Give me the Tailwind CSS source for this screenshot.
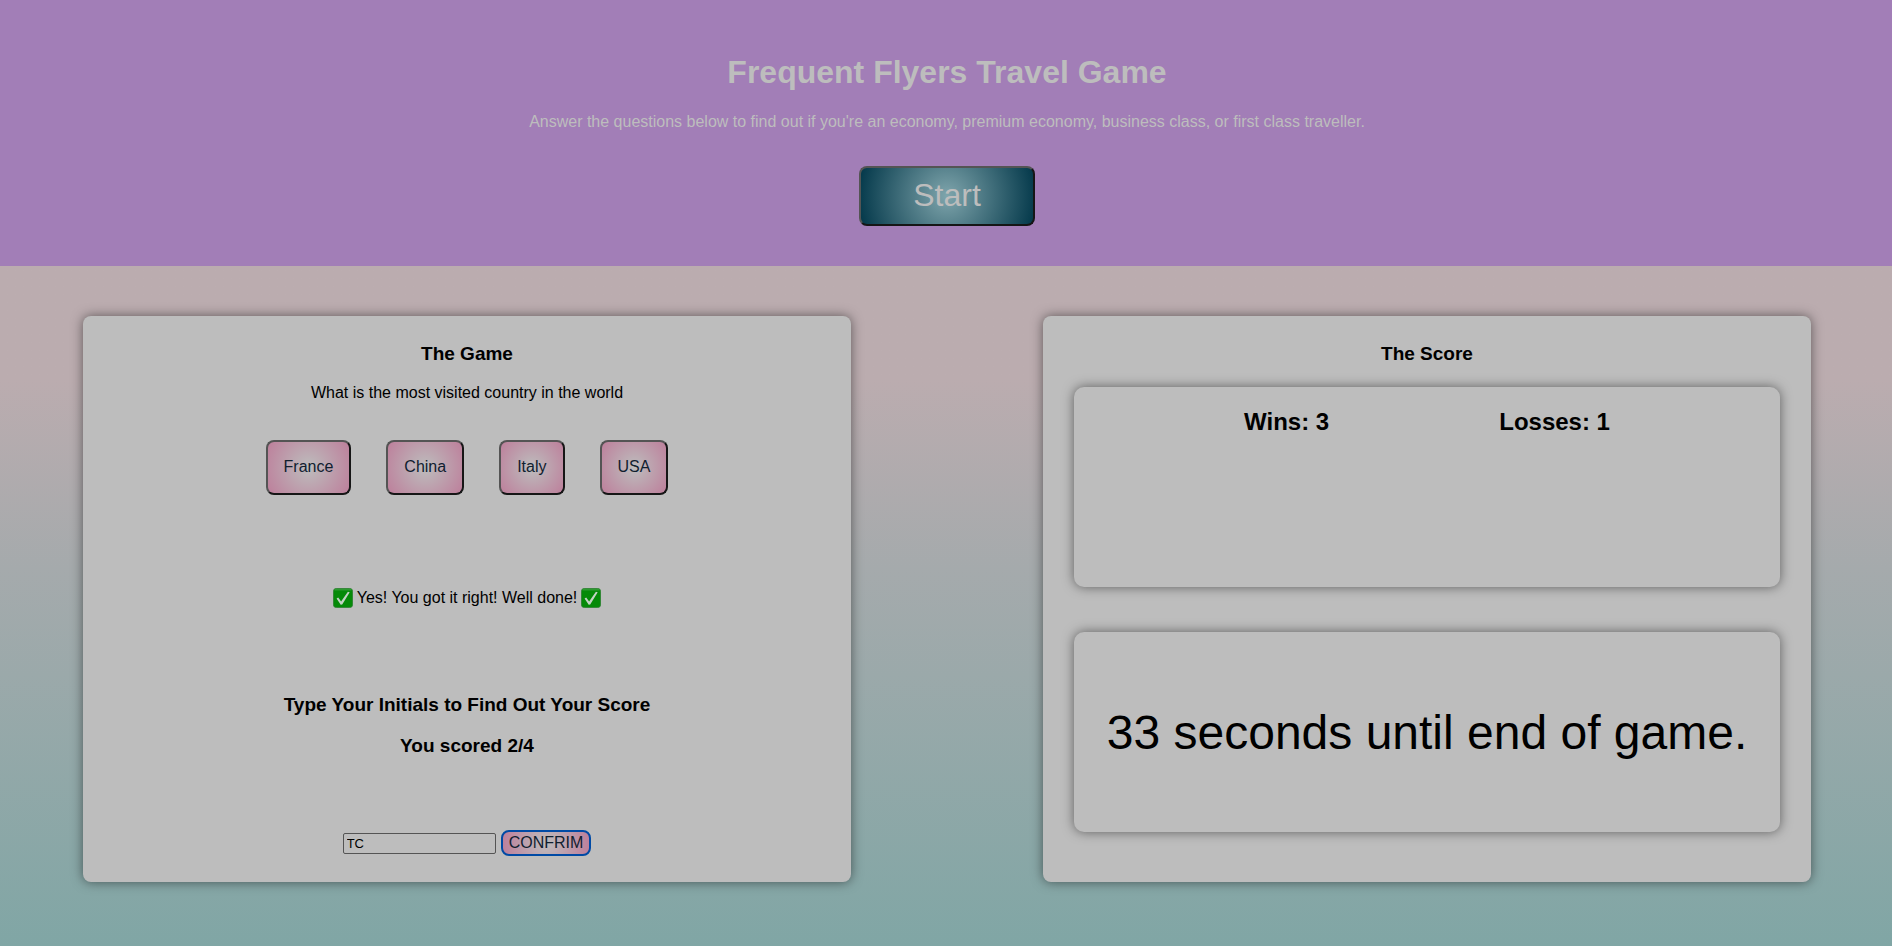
<!DOCTYPE html>
<html lang="en">
<head>
<meta charset="utf-8">
<meta name="viewport" content="width=device-width, initial-scale=1">
<title>Frequent Flyers Travel Game</title>
<script src="https://cdn.jsdelivr.net/npm/@tailwindcss/browser@4"></script>
</head>
<body class="flex min-h-screen flex-col bg-linear-to-b from-[#bbacaf] from-40% via-[#a5aaac] via-60% to-[#80a6a5] text-center font-['Liberation_Sans',Arial,sans-serif] text-base text-black">
<svg class="hidden" aria-hidden="true">
  <symbol id="tick" viewBox="0 0 20 20">
    <rect x=".4" y=".4" width="19.2" height="19.2" rx="3" fill="#058a08" stroke="#2a7d2e" stroke-width=".8"/>
    <rect x="1.2" y="1" width="17.6" height="1.6" rx=".8" fill="#2c9a2f"/>
    <path d="M3.6 10.6 5.2 9.5 8.1 13.6 14.9 3.8 16.7 4.3 9.2 16.6 7.7 16.7Z" fill="#c3d3c4"/>
  </symbol>
</svg>
<header class="flex flex-col items-center bg-[#a27eb7] pt-[54px] pb-10 pl-0.5 text-[#bdbdbd]">
  <h1 class="text-[32px] leading-[37px] font-bold">Frequent Flyers Travel Game</h1>
  <p class="mt-[22px] leading-[18px]">Answer the questions below to find out if you're an economy, premium economy, business class, or first class traveller.</p>
  <button type="button" class="mt-[35px] h-15 w-44 rounded-lg border-2 border-t-[#545454] border-r-[#161616] border-b-[#161616] border-l-[#545454] bg-[radial-gradient(circle,#7fa5ac,#03384a)] pb-0.5 text-[32px] leading-9">Start</button>
</header>
<main class="grid grid-cols-2 gap-48 pt-[50px] pr-[81px] pb-16 pl-[83px]">
  <section class="flex min-h-[566px] flex-col items-center rounded-lg bg-[#bdbdbd] pt-[27px] pb-[26px] shadow-[0_0_12px_rgba(0,0,0,0.5)]">
    <h2 class="text-[19px] leading-[22px] font-bold">The Game</h2>
    <p class="mt-[19px] leading-[18px]">What is the most visited country in the world</p>
    <div class="mt-[38px] flex gap-[35px] text-[#10202f]">
      <button type="button" class="h-[55px] rounded-lg border-2 border-t-[#545454] border-r-[#161616] border-b-[#161616] border-l-[#545454] bg-[radial-gradient(circle,#bdbdbd,#bd7f9b)] px-4 pb-0.5">France</button>
      <button type="button" class="h-[55px] rounded-lg border-2 border-t-[#545454] border-r-[#161616] border-b-[#161616] border-l-[#545454] bg-[radial-gradient(circle,#bdbdbd,#bd7f9b)] px-4 pb-0.5">China</button>
      <button type="button" class="h-[55px] rounded-lg border-2 border-t-[#545454] border-r-[#161616] border-b-[#161616] border-l-[#545454] bg-[radial-gradient(circle,#bdbdbd,#bd7f9b)] px-4 pb-0.5">Italy</button>
      <button type="button" class="h-[55px] rounded-lg border-2 border-t-[#545454] border-r-[#161616] border-b-[#161616] border-l-[#545454] bg-[radial-gradient(circle,#bdbdbd,#bd7f9b)] px-4 pb-0.5">USA</button>
    </div>
    <p class="mt-[93px] flex items-center gap-1 leading-5">
      <svg class="size-5" aria-hidden="true"><use href="#tick"/></svg>
      Yes! You got it right! Well done!
      <svg class="size-5" aria-hidden="true"><use href="#tick"/></svg>
    </p>
    <h2 class="mt-[86px] text-[19px] leading-[22px] font-bold">Type Your Initials to Find Out Your Score</h2>
    <h2 class="mt-[19px] text-[19px] leading-[22px] font-bold">You scored 2/4</h2>
    <form class="mt-auto flex items-center gap-[5px]">
      <input type="text" aria-label="Your initials" value="TC" class="h-[21px] w-[153px] rounded-[2px] border border-[#545454] px-[3px] text-[13px]">
      <button type="button" class="h-[26px] rounded-lg border-2 border-[#004aa5] bg-[radial-gradient(circle,#bdbdbd,#bd7f9b)] px-1.5 leading-5 text-[#10202f]">CONFRIM</button>
    </form>
  </section>
  <section class="flex min-h-[566px] flex-col items-stretch rounded-lg bg-[#bdbdbd] px-[31px] pt-[27px] pb-[50px] shadow-[0_0_12px_rgba(0,0,0,0.5)]">
    <h2 class="text-[19px] leading-[22px] font-bold">The Score</h2>
    <div class="mt-[22px] flex min-h-[200px] justify-evenly rounded-[10px] pt-[21px] text-2xl leading-7 font-bold shadow-[0_0_12px_rgba(0,0,0,0.5)]">
      <p>Wins: 3</p>
      <p>Losses: 1</p>
    </div>
    <div class="mt-[45px] flex min-h-[200px] items-center justify-center rounded-[10px] pt-0.5 text-5xl shadow-[0_0_12px_rgba(0,0,0,0.5)]">
      <p>33 seconds until end of game.</p>
    </div>
  </section>
</main>
</body>
</html>
